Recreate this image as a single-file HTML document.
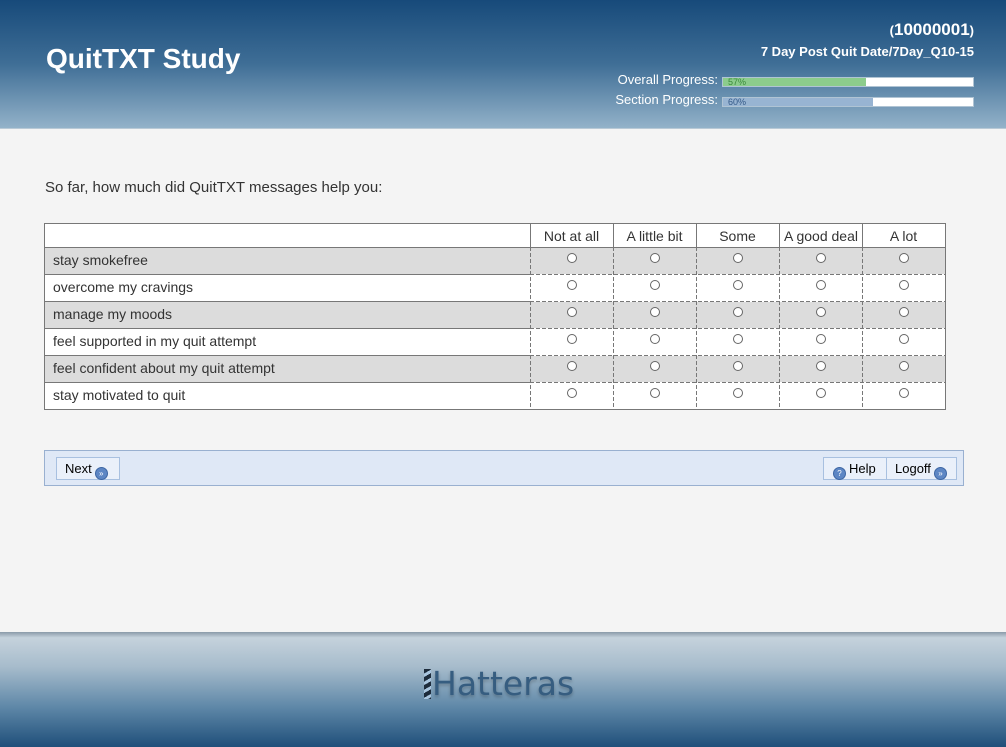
<!DOCTYPE html>
<html><head><meta charset="utf-8"><style>
*{margin:0;padding:0;box-sizing:border-box}
body{width:1006px;height:747px;position:relative;background:#f4f4f4;font-family:"Liberation Sans",Arial,sans-serif;overflow:hidden}
#hdr{position:absolute;left:0;top:0;width:1006px;height:129px;background:linear-gradient(#174a7a 0%,#3f6e96 50%,#93b2c9 100%);border-bottom:1px solid #b9c9d6}
#title{position:absolute;left:46px;top:43px;color:#fff;font-weight:bold;font-size:28px}
.r{position:absolute;right:32px;color:#fff;font-weight:bold;text-align:right}
.pl{position:absolute;color:#fff;font-size:13px;text-align:right;width:200px}
.bar{position:absolute;left:722px;width:252px;height:10px;background:#fff;border:1px solid #b0c4d4}
.bar div{height:100%;font-size:9px;line-height:9px;padding-left:5px}
#q{position:absolute;left:45px;top:179px;font-size:15px;color:#333}
.c{position:absolute;font-size:14px;color:#333}
#nav{position:absolute;left:44px;top:450px;width:920px;height:36px;background:#dfe8f6;border:1px solid #99b0d0}
.btn{position:absolute;top:6px;height:23px;border:1px solid #a8c0e0;background:#eaf0fa;font-size:13px;line-height:21px;color:#000;padding-left:8px;white-space:nowrap}
.ic{display:inline-block;width:13px;height:13px;border-radius:50%;background:#5d86c4;border:1px solid #3d66a4;vertical-align:-3px;color:#fff;font-size:8px;line-height:11px;text-align:center;margin-left:3px}
#ftr{position:absolute;left:0;top:632px;width:1006px;height:115px;background:linear-gradient(#8a9aa8 0%,#c5d2dc 5%,#a7bccc 30%,#5f88a8 65%,#1f4f7a 100%)}
#logo{position:absolute;left:424px;top:664px;font-size:33px;line-height:40px;color:#365d80;font-family:"DejaVu Sans",sans-serif;text-shadow:0 2px 3px rgba(0,0,0,.25)}
</style></head><body>
<div id="hdr">
<div id="title">QuitTXT Study</div>
<div class="r" style="top:20px;font-size:17px"><span style="font-size:13px">(</span>10000001<span style="font-size:13px">)</span></div>
<div class="r" style="top:44px;font-size:13px">7 Day Post Quit Date/7Day_Q10-15</div>
<div class="pl" style="left:518px;top:72px">Overall Progress:</div>
<div class="bar" style="top:77px"><div style="width:143px;background:#8ccc8c;color:#3a8a3a">57%</div></div>
<div class="pl" style="left:518px;top:92px">Section Progress:</div>
<div class="bar" style="top:97px"><div style="width:150px;background:#98b4d2;color:#355a88">60%</div></div>
</div>
<div id="q">So far, how much did QuitTXT messages help you:</div>
<svg style="position:absolute;left:0;top:0" width="1006" height="747">
<rect x="44.5" y="223.5" width="901" height="186" fill="#fff" stroke="#777"/>
<g fill="#dcdcdc"><rect x="45" y="248" width="900" height="26"/><rect x="45" y="302" width="900" height="26"/><rect x="45" y="356" width="900" height="26"/></g>
<line x1="44" y1="247.5" x2="945" y2="247.5" stroke="#777"/>
<g stroke="#777"><line x1="44" y1="274.5" x2="530" y2="274.5"/><line x1="44" y1="301.5" x2="530" y2="301.5"/><line x1="44" y1="328.5" x2="530" y2="328.5"/><line x1="44" y1="355.5" x2="530" y2="355.5"/><line x1="44" y1="382.5" x2="530" y2="382.5"/></g>
<g stroke="#777" stroke-dasharray="4,2"><line x1="530" y1="274.5" x2="945" y2="274.5"/><line x1="530" y1="301.5" x2="945" y2="301.5"/><line x1="530" y1="328.5" x2="945" y2="328.5"/><line x1="530" y1="355.5" x2="945" y2="355.5"/><line x1="530" y1="382.5" x2="945" y2="382.5"/>
<line x1="530.5" y1="247" x2="530.5" y2="409"/><line x1="613.5" y1="247" x2="613.5" y2="409"/><line x1="696.5" y1="247" x2="696.5" y2="409"/><line x1="779.5" y1="247" x2="779.5" y2="409"/><line x1="862.5" y1="247" x2="862.5" y2="409"/></g>
<g stroke="#777"><line x1="530.5" y1="223" x2="530.5" y2="247"/><line x1="613.5" y1="223" x2="613.5" y2="247"/><line x1="696.5" y1="223" x2="696.5" y2="247"/><line x1="779.5" y1="223" x2="779.5" y2="247"/><line x1="862.5" y1="223" x2="862.5" y2="247"/></g>
<g fill="#fff" stroke="#666">
<circle cx="572" cy="258" r="4.5"/><circle cx="655" cy="258" r="4.5"/><circle cx="738" cy="258" r="4.5"/><circle cx="821" cy="258" r="4.5"/><circle cx="904" cy="258" r="4.5"/>
<circle cx="572" cy="285" r="4.5"/><circle cx="655" cy="285" r="4.5"/><circle cx="738" cy="285" r="4.5"/><circle cx="821" cy="285" r="4.5"/><circle cx="904" cy="285" r="4.5"/>
<circle cx="572" cy="312" r="4.5"/><circle cx="655" cy="312" r="4.5"/><circle cx="738" cy="312" r="4.5"/><circle cx="821" cy="312" r="4.5"/><circle cx="904" cy="312" r="4.5"/>
<circle cx="572" cy="339" r="4.5"/><circle cx="655" cy="339" r="4.5"/><circle cx="738" cy="339" r="4.5"/><circle cx="821" cy="339" r="4.5"/><circle cx="904" cy="339" r="4.5"/>
<circle cx="572" cy="366" r="4.5"/><circle cx="655" cy="366" r="4.5"/><circle cx="738" cy="366" r="4.5"/><circle cx="821" cy="366" r="4.5"/><circle cx="904" cy="366" r="4.5"/>
<circle cx="572" cy="393" r="4.5"/><circle cx="655" cy="393" r="4.5"/><circle cx="738" cy="393" r="4.5"/><circle cx="821" cy="393" r="4.5"/><circle cx="904" cy="393" r="4.5"/>
</g>
</svg>
<div class="c" style="left:530px;width:83px;text-align:center;top:228px">Not at all</div>
<div class="c" style="left:613px;width:83px;text-align:center;top:228px">A little bit</div>
<div class="c" style="left:696px;width:83px;text-align:center;top:228px">Some</div>
<div class="c" style="left:779px;width:84px;text-align:center;top:228px">A good deal</div>
<div class="c" style="left:862px;width:83px;text-align:center;top:228px">A lot</div>
<div class="c" style="left:53px;top:252px">stay smokefree</div>
<div class="c" style="left:53px;top:279px">overcome my cravings</div>
<div class="c" style="left:53px;top:306px">manage my moods</div>
<div class="c" style="left:53px;top:333px">feel supported in my quit attempt</div>
<div class="c" style="left:53px;top:360px">feel confident about my quit attempt</div>
<div class="c" style="left:53px;top:387px">stay motivated to quit</div>
<div id="nav">
<div class="btn" style="left:11px;width:64px">Next<span class="ic">»</span></div>
<div class="btn" style="left:778px;width:64px;padding-left:9px"><span class="ic" style="margin:0 3px 0 0">?</span>Help</div>
<div class="btn" style="left:841px;width:71px">Logoff<span class="ic">»</span></div>
</div>
<div id="ftr"></div>
<div id="logo"><span style="display:inline-block;width:7px;height:30px;background:repeating-linear-gradient(150deg,#1d2c3c 0 4px,#a9c6e0 4px 7px);vertical-align:-4px;margin-right:1px"></span>Hatteras</div>
</body></html>
